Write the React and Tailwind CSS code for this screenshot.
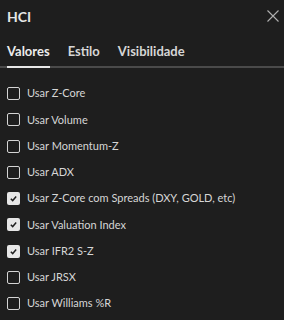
const items = [
	{ label: "Usar Z-Core", checked: false },
	{ label: "Usar Volume", checked: false },
	{ label: "Usar Momentum-Z", checked: false },
	{ label: "Usar ADX", checked: false },
	{ label: "Usar Z-Core com Spreads (DXY, GOLD, etc)", checked: true },
	{ label: "Usar Valuation Index", checked: true },
	{ label: "Usar IFR2 S-Z", checked: true },
	{ label: "Usar JRSX", checked: false },
	{ label: "Usar Williams %R", checked: false },
];

function Box({ checked }) {
	if (checked) {
		return (
			<span className="flex h-[13px] w-[13px] shrink-0 items-center justify-center rounded-[2px] bg-[#e6e6e6]">
				<svg width="9" height="9" viewBox="0 0 10 10" fill="none">
					<path d="M2 5.2 L4.1 7.3 L8 2.8" stroke="#1e1e1e" strokeWidth="1.6" />
				</svg>
			</span>
		);
	}
	return <span className="h-[13px] w-[13px] shrink-0 rounded-[2px] border border-[#d4d4d4]" />;
}

export default function App() {
	return (
		<div
			className="h-[320px] w-[284px] overflow-hidden bg-[#1e1e1e] text-[#d6d6d6]"
			style={{ fontFamily: "Lato, sans-serif" }}
		>
			<div className="flex h-[32px] items-center justify-between pl-[7px] pr-[2px]">
				<h1 className="m-0 text-[14px] font-bold text-[#e6e6e6]">HCI</h1>
				<svg width="14" height="14" viewBox="0 0 14 14" className="mr-[2px]">
					<path d="M1.5 1.5 L12.5 12.5 M12.5 1.5 L1.5 12.5" stroke="#b0b0b0" strokeWidth="1.1" />
				</svg>
			</div>

			<div className="mt-[10px] flex border-b-2 border-[#4a4a4a] pl-[7px]">
				<div className="-mb-[2px] border-b-2 border-[#e6e6e6] pb-[4px] text-[13px] font-bold text-[#ececec]">Valores</div>
				<div className="ml-[18px] pb-[4px] text-[13px] font-bold text-[#d6d6d6]">Estilo</div>
				<div className="ml-[18px] pb-[4px] text-[13px] font-bold text-[#d6d6d6]">Visibilidade</div>
			</div>

			<ul className="m-0 mt-[13px] list-none p-0 pl-[7px]">
				{items.map((it) => (
					<li key={it.label} className="flex h-[26.25px] items-center gap-[7px] text-[11px]">
						<Box checked={it.checked} />
						<span>{it.label}</span>
					</li>
				))}
			</ul>
		</div>
	);
}
